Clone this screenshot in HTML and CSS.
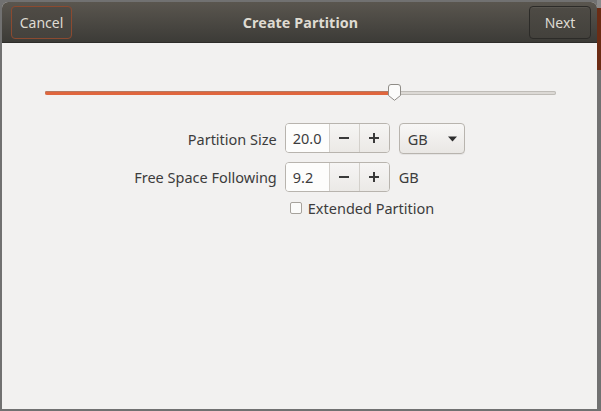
FILE: index.html
```html
<!DOCTYPE html>
<html>
<head>
<meta charset="utf-8">
<link rel="stylesheet" href="styles.css">
</head>
<body>
<div class="dialog">
  <header class="headerbar">
    <button class="hb-btn cancel">Cancel</button>
    <div class="title">Create Partition</div>
    <button class="hb-btn next">Next</button>
  </header>
  <main class="content">
    <div class="scale">
      <div class="trough">
        <div class="fill" style="width:68.3%"></div>
        <div class="handle" style="left:68.3%">
          <svg width="13" height="17" viewBox="0 0 13 17"><path d="M0.5 3 Q0.5 0.5 3 0.5 H10 Q12.5 0.5 12.5 3 V11.5 L6.5 16.3 L0.5 11.5 Z" fill="#fbfbfa" stroke="#8f8c87" stroke-width="1"/></svg>
        </div>
      </div>
    </div>
    <div class="form">
      <div class="label">Partition Size</div>
      <div class="controls">
        <div class="spin">
          <div class="spin-entry">20.0</div>
          <div class="spin-btn"><svg width="12" height="12" viewBox="0 0 12 12"><rect x="1" y="5" width="10" height="2" fill="#3a3a3a"/></svg></div>
          <div class="spin-btn"><svg width="12" height="12" viewBox="0 0 12 12"><rect x="1" y="5" width="10" height="2" fill="#3a3a3a"/><rect x="5" y="1" width="2" height="10" fill="#3a3a3a"/></svg></div>
        </div>
        <div class="combo"><span>GB</span><svg width="9" height="6" viewBox="0 0 9 6"><path d="M0 0.5 H9 L4.5 5.5 Z" fill="#2e2e2e"/></svg></div>
      </div>
      <div class="label">Free Space Following</div>
      <div class="controls">
        <div class="spin">
          <div class="spin-entry">9.2</div>
          <div class="spin-btn"><svg width="12" height="12" viewBox="0 0 12 12"><rect x="1" y="5" width="10" height="2" fill="#3a3a3a"/></svg></div>
          <div class="spin-btn"><svg width="12" height="12" viewBox="0 0 12 12"><rect x="1" y="5" width="10" height="2" fill="#3a3a3a"/><rect x="5" y="1" width="2" height="10" fill="#3a3a3a"/></svg></div>
        </div>
        <div class="unit">GB</div>
      </div>
      <div class="spacer"></div>
      <label class="check"><span class="box"></span><span>Extended Partition</span></label>
    </div>
  </main>
</div>
</body>
</html>
```

FILE: styles.css
```css
html, body {
  margin: 0;
  padding: 0;
}
body {
  width: 601px;
  height: 411px;
  overflow: hidden;
  background:
    linear-gradient(#8a8a8a 0 8px, #6b2c14 8px 70px, transparent 70px) right top / 4px 100% no-repeat,
    #717171;
  font-family: "Noto Sans", "Open Sans", sans-serif;
  font-size: 14.5px;
  color: #3c3c3c;
}
.dialog {
  margin: 2px 4px 0 2px;
  width: 595px;
  height: 407px;
  background: #f2f1f0;
  border-radius: 6px 6px 0 0;
  overflow: hidden;
  display: flex;
  flex-direction: column;
}
.headerbar {
  height: 40px;
  flex: none;
  border-bottom: 1px solid #2e2d2a;
  background: linear-gradient(#5a564f, #3c3b37);
  display: flex;
  align-items: center;
  justify-content: space-between;
  padding: 0 6px 0 9px;
}
.hb-btn {
  height: 33px;
  width: 61px;
  border-radius: 4px;
  font-family: inherit;
  font-size: 14px;
  color: #dfdbd2;
  padding: 0;
  background: linear-gradient(#4e4b45, #43413c);
}
.cancel {
  width: 61px;
  border: 1px solid #8b4a30;
  background: linear-gradient(#4f4b45, #44423d);
}
.next {
  width: 62px;
  border: 1px solid #2c2b28;
  box-shadow: inset 0 1px rgba(255,255,255,0.06);
}
.title {
  font-weight: bold;
  color: #dfdbd2;
  font-size: 14.3px;
  letter-spacing: 0.1px;
}
.content {
  flex: 1;
  padding-top: 41px;
}
.scale {
  margin: 0 41px 0 43px;
  height: 18px;
  display: flex;
  align-items: center;
}
.trough {
  position: relative;
  width: 100%;
  height: 4px;
  border-radius: 2px;
  background: #dcd9d5;
  box-shadow: inset 0 0 0 1px #bfbcb7;
}
.fill {
  height: 4px;
  border-radius: 2px 0 0 2px;
  background: #e0663d;
  box-shadow: inset 0 1px #b8785f;
}
.handle {
  position: absolute;
  top: -7px;
  width: 13px;
  height: 17px;
  margin-left: -6px;
}
.handle svg { display: block; }
.form {
  margin-top: 21px;
  display: grid;
  grid-template-columns: auto auto;
  column-gap: 8px;
  row-gap: 8px;
  justify-content: center;
  align-items: center;
}
.label {
  text-align: right;
  white-space: nowrap;
}
.controls {
  display: flex;
  align-items: flex-start;
  gap: 9px;
}
.spin {
  display: flex;
  border: 1px solid #b8b4ae;
  border-radius: 4px;
  overflow: hidden;
  box-sizing: border-box;
  height: 30px;
}
.spin-entry {
  width: 36px;
  padding-left: 7px;
  background: #fdfdfc;
  display: flex;
  align-items: center;
  color: #3c3c3c;
}
.spin-btn {
  width: 29px;
  border-left: 1px solid #d3d0cb;
  background: linear-gradient(#f6f5f4, #ebe9e6);
  display: flex;
  align-items: center;
  justify-content: center;
}
.spin-btn svg { display: block; }
.combo {
  box-sizing: border-box;
  width: 66px;
  height: 31px;
  border: 1px solid #b8b4ae;
  border-radius: 4px;
  background: linear-gradient(#f8f7f6, #e9e7e4);
  box-shadow: 0 1px rgba(0,0,0,0.05);
  display: flex;
  align-items: center;
  justify-content: space-between;
  padding: 0 7px 0 8px;
}
.combo svg { display: block; }
.unit { line-height: 30px; }
.check {
  display: flex;
  align-items: center;
  gap: 6px;
  margin-left: 5px;
  height: 16px;
}
.box {
  width: 10px;
  height: 10px;
  border: 1px solid #a6a29c;
  border-radius: 2px;
  background: #fbfbfa;
}
```
